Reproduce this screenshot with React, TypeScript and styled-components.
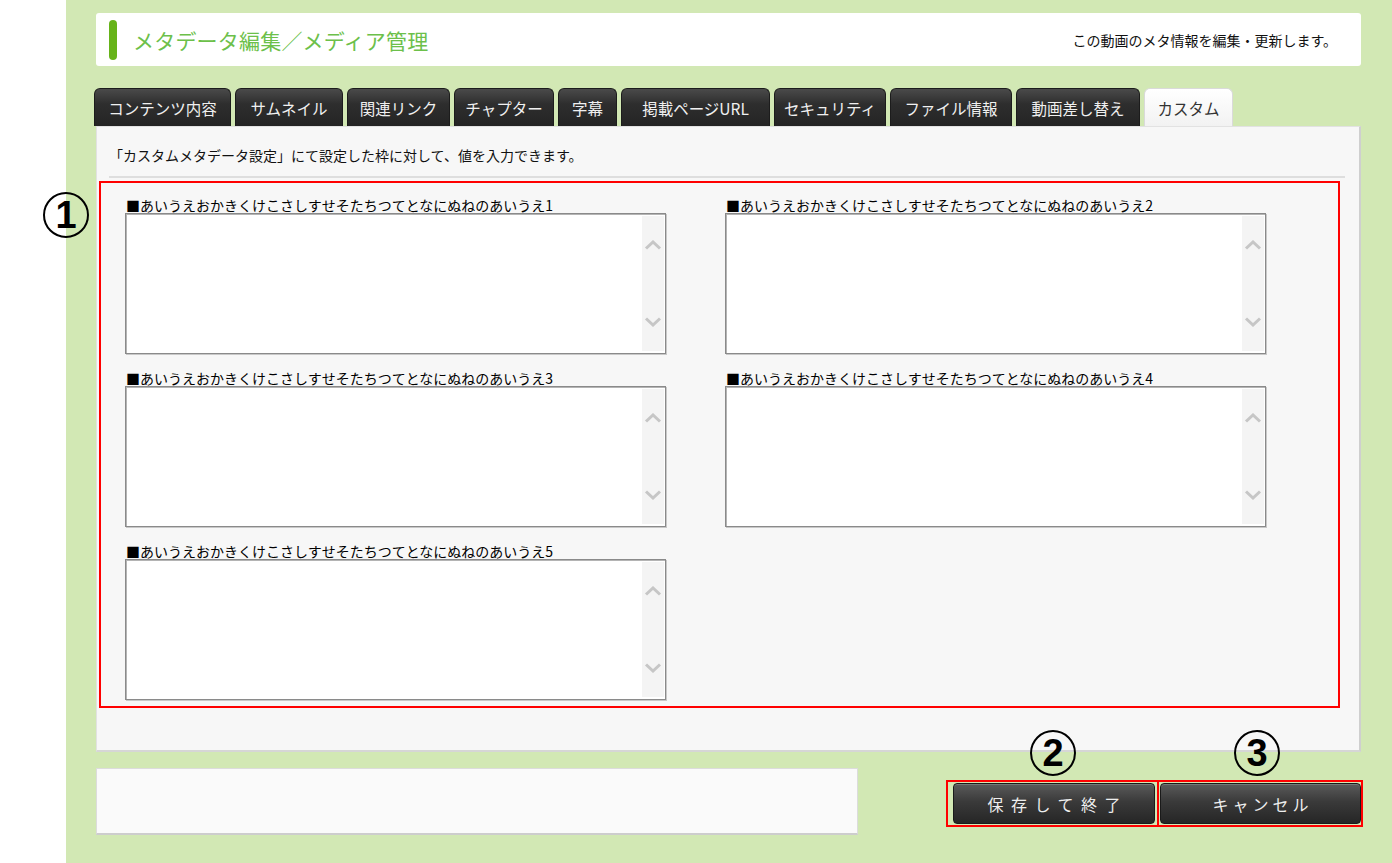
import React from "react";
import styled, { createGlobalStyle } from "styled-components";

const GlobalStyle = createGlobalStyle`
  html, body {
    margin: 0;
    padding: 0;
    background: #fff;
  }
  body {
    font-family: "Noto Sans CJK JP", "Noto Sans", sans-serif;
    color: #000;
  }
`;

// Layout
const Root = styled.div`
  position: relative;
  display: flex;
  width: 1392px;
  min-height: 863px;
`;

const LeftBlank = styled.div`
  width: 66px;
  flex-shrink: 0;
  background: #fff;
`;

const Main = styled.div`
  flex: 1;
  background: #d2e8b4;
  padding: 13px 31px 0 30px;
  box-sizing: border-box;
`;

// Header
const Header = styled.div`
  height: 53px;
  background: #fff;
  border-radius: 3px;
  display: flex;
  align-items: center;
  padding: 0 24px 0 13px;
`;

const TitleBar = styled.span`
  width: 8px;
  height: 40px;
  border-radius: 4px;
  background: #66b319;
  margin-right: 16px;
`;

const Title = styled.h1`
  margin: 0;
  font-size: 21px;
  font-weight: 400;
  color: #6cc04a;
  letter-spacing: 0.2px;
  flex: 1;
`;

const HeaderNote = styled.span`
  font-size: 14px;
  color: #111;
`;

// Tabs
const TabRow = styled.div`
  display: flex;
  gap: 4px;
  margin: 22px 0 0 -2px;
  height: 38px;
`;

const Tab = styled.div<{ $w: number; $active?: boolean }>`
  width: ${(p) => p.$w}px;
  box-sizing: border-box;
  display: flex;
  align-items: center;
  justify-content: center;
  font-size: 15.5px;
  border-radius: 6px 6px 0 0;
  color: ${(p) => (p.$active ? "#333" : "#f0f0f0")};
  background: ${(p) =>
    p.$active
      ? "linear-gradient(180deg, #ffffff 0%, #f2f2f2 100%)"
      : "linear-gradient(180deg, #4a4a4a 0%, #2e2e2e 40%, #242424 100%)"};
  border: 1px solid ${(p) => (p.$active ? "#dadada" : "#1c1c1c")};
  border-bottom: none;
  white-space: nowrap;
`;

// Panel
const Panel = styled.div`
  height: 626px;
  box-sizing: border-box;
  background: #f7f7f7;
  border: 1px solid #e2e2e2;
  border-right: 2px solid #cfcfcf;
  border-bottom: 2px solid #d6d6d6;
  padding-top: 20px;
`;

const Description = styled.p`
  margin: 0 0 0 12px;
  font-size: 14px;
  line-height: 16px;
  color: #111;
`;

const Separator = styled.div`
  height: 2px;
  background: #dedede;
  margin: 13px 14px 0 12px;
`;

const FieldArea = styled.div`
  margin: 3px 19px 0 2px;
  border: 2px solid #f00;
  padding: 14px 0 6px 24px;
  display: grid;
  grid-template-columns: 541px 541px;
  column-gap: 59px;
  row-gap: 16px;
`;

const Field = styled.div`
  display: flex;
  flex-direction: column;
`;

const FieldLabel = styled.label`
  font-size: 14px;
  line-height: 16px;
  color: #000;
  white-space: nowrap;
  padding-left: 1px;
`;

const TextBox = styled.div`
  height: 141px;
  box-sizing: border-box;
  display: flex;
  background: #fff;
  border: 1px solid #8a8a8a;
  box-shadow: inset 1px 1px 0 #b4b4b4, 1px 1px 0 #c8c8c8;
  padding: 2px 1px 2px 2px;
`;

const TextInput = styled.textarea`
  flex: 1;
  border: none;
  outline: none;
  resize: none;
  background: transparent;
  font-family: inherit;
  font-size: 14px;
  overflow: hidden;
`;

const ScrollTrack = styled.div`
  width: 22px;
  background: #f4f4f4;
  display: flex;
  flex-direction: column;
  align-items: center;
  justify-content: space-between;
  padding: 24px 0;
`;

// Bottom
const BottomRow = styled.div`
  display: flex;
  justify-content: space-between;
  align-items: flex-start;
  margin-top: 16px;
`;

const NoteBox = styled.div`
  width: 762px;
  height: 67px;
  box-sizing: border-box;
  background: #fafafa;
  border: 1px solid #dcdcdc;
  border-bottom: 2px solid #cdcdcd;
`;

const ButtonGroup = styled.div`
  position: relative;
  display: flex;
  margin: 12px -2px 0 0;
`;

const ButtonFrame = styled.div<{ $pad: string; $join?: boolean }>`
  border: 2px solid #f00;
  padding: ${(p) => p.$pad};
  margin-left: ${(p) => (p.$join ? "-2px" : "0")};
  display: flex;
`;

const ActionButton = styled.button<{ $w: number; $spacing: number }>`
  width: ${(p) => p.$w}px;
  height: 41px;
  border: 1px solid #1a1a1a;
  border-radius: 4px;
  background: linear-gradient(180deg, #5a5a5a 0%, #3a3a3a 45%, #262626 100%);
  box-shadow: inset 0 1px 0 #777;
  color: #eee;
  font-family: "Noto Sans CJK JP", sans-serif;
  font-size: 16px;
  letter-spacing: ${(p) => p.$spacing}px;
  padding: 0 0 0 ${(p) => p.$spacing}px;
  cursor: pointer;
`;

// Annotations
const Marker = styled.span<{ $left: number; $top: number }>`
  position: absolute;
  left: ${(p) => p.$left}px;
  top: ${(p) => p.$top}px;
  width: 42px;
  height: 42px;
  border: 2px solid #000;
  border-radius: 50%;
  display: flex;
  align-items: center;
  justify-content: center;
  font-family: "Liberation Sans", Arial, sans-serif;
  font-weight: 700;
  font-size: 38px;
  line-height: 1;
  color: #000;
  background: transparent;
`;

const Chevron = ({ up }: { up?: boolean }) => (
  <svg width="18" height="10" viewBox="0 0 18 10">
    <polyline
      points={up ? "2,8.5 9,2 16,8.5" : "2,1.5 9,8 16,1.5"}
      fill="none"
      stroke="#c6c6c6"
      strokeWidth="3"
    />
  </svg>
);

const tabs = [
  { label: "コンテンツ内容", w: 137 },
  { label: "サムネイル", w: 108 },
  { label: "関連リンク", w: 103 },
  { label: "チャプター", w: 100 },
  { label: "字幕", w: 59 },
  { label: "掲載ページURL", w: 149 },
  { label: "セキュリティ", w: 112 },
  { label: "ファイル情報", w: 122 },
  { label: "動画差し替え", w: 124 },
  { label: "カスタム", w: 89, active: true },
];

const fields = [1, 2, 3, 4, 5];

export default function App() {
  return (
    <>
      <GlobalStyle />
      <Root>
        <LeftBlank />
        <Main>
          <Header>
            <TitleBar />
            <Title>メタデータ編集／メディア管理</Title>
            <HeaderNote>この動画のメタ情報を編集・更新します。</HeaderNote>
          </Header>

          <TabRow>
            {tabs.map((t) => (
              <Tab key={t.label} $w={t.w} $active={t.active}>
                {t.label}
              </Tab>
            ))}
          </TabRow>

          <Panel>
            <Description>
              「カスタムメタデータ設定」にて設定した枠に対して、値を入力できます。
            </Description>
            <Separator />
            <FieldArea>
              {fields.map((n) => (
                <Field key={n}>
                  <FieldLabel>
                    ■あいうえおかきくけこさしすせそたちつてとなにぬねのあいうえ{n}
                  </FieldLabel>
                  <TextBox>
                    <TextInput />
                    <ScrollTrack>
                      <Chevron up />
                      <Chevron />
                    </ScrollTrack>
                  </TextBox>
                </Field>
              ))}
            </FieldArea>
          </Panel>

          <BottomRow>
            <NoteBox />
            <ButtonGroup>
              <Marker $left={84} $top={-50}>2</Marker>
              <Marker $left={288} $top={-50}>3</Marker>
              <ButtonFrame $pad="1px 2px 1px 5px">
                <ActionButton $w={202} $spacing={7.5}>保存して終了</ActionButton>
              </ButtonFrame>
              <ButtonFrame $pad="1px 0 1px 1px" $join>
                <ActionButton $w={201} $spacing={4}>キャンセル</ActionButton>
              </ButtonFrame>
            </ButtonGroup>
          </BottomRow>
        </Main>
        <Marker $left={43} $top={192}>1</Marker>
      </Root>
    </>
  );
}
